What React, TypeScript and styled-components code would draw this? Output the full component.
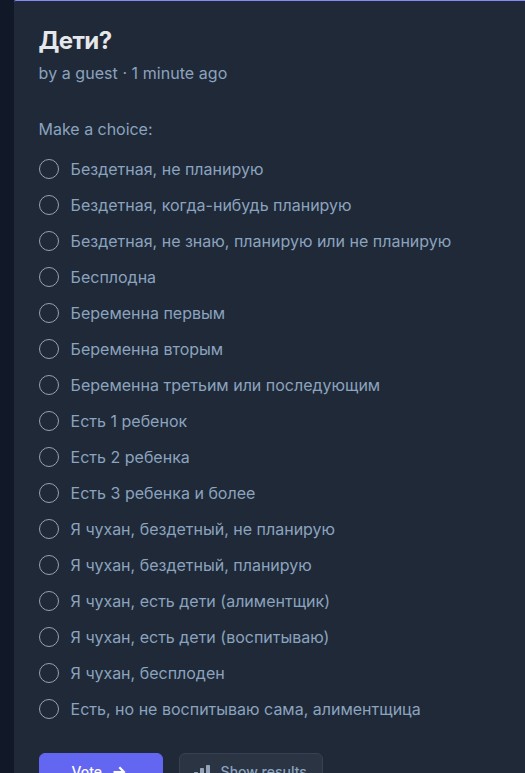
import React from "react";
import styled, { createGlobalStyle } from "styled-components";

const Global = createGlobalStyle`
  *, *::before, *::after { box-sizing: border-box; }
  body { margin: 0; background: #111827; font-family: Inter, "Liberation Sans", sans-serif; overflow: hidden; }
`;
const Page = styled.main`
  height: 773px;
  padding-left: 14px;
  overflow: hidden;
`;
const Card = styled.section`
  height: 820px;
  padding: 24px 24px 0 24.6px;
  background: #1f2937;
  border-top: 1px solid #818cf8;
  border-top-left-radius: 2px;
`;
const Title = styled.h1`
  margin: 0;
  font-size: 24px;
  line-height: 32px;
  font-weight: 700;
  letter-spacing: -0.6px;
  color: #e5e7eb;
`;
const Meta = styled.p`
  margin: 4px 0 32px;
  font-size: 16px;
  line-height: 24px;
  letter-spacing: 0.05px;
  color: #8ba3bf;
`;
const Prompt = styled.p`
  margin: 0 0 16px;
  font-size: 16px;
  line-height: 24px;
  letter-spacing: -0.03px;
  color: #8ba3bf;
`;
const Options = styled.div`
  display: flex;
  flex-direction: column;
  gap: 12px;
`;
const Option = styled.label`
  display: flex;
  align-items: center;
  gap: 12px;
  height: 24px;
  font-size: 16px;
  line-height: 24px;
  color: #8ba3bf;
  white-space: nowrap;
`;
const Radio = styled.input.attrs({ type: "radio", name: "choice" })`
  appearance: none;
  width: 20px;
  height: 20px;
  margin: 0;
  border: 1px solid #94a3b8;
  border-radius: 50%;
`;
const Actions = styled.div`
  display: flex;
  gap: 16px;
  margin-top: 32px;
`;
const Button = styled.button<{ $primary?: boolean }>`
  display: flex;
  align-items: center;
  gap: ${(p) => (p.$primary ? 10 : 9)}px;
  width: ${(p) => (p.$primary ? 124 : 144)}px;
  height: 38px;
  padding: 0 0 0 ${(p) => (p.$primary ? 32 : 12)}px;
  border: 1px solid ${(p) => (p.$primary ? "#6366f1" : "#374151")};
  border-radius: 6px;
  background: ${(p) => (p.$primary ? "#6366f1" : "#2a3443")};
  color: ${(p) => (p.$primary ? "#fff" : "#8ba3bf")};
  font: 500 14px/20px Inter, sans-serif;
`;

const choices = [
  "Бездетная, не планирую",
  "Бездетная, когда-нибудь планирую",
  "Бездетная, не знаю, планирую или не планирую",
  "Бесплодна",
  "Беременна первым",
  "Беременна вторым",
  "Беременна третьим или последующим",
  "Есть 1 ребенок",
  "Есть 2 ребенка",
  "Есть 3 ребенка и более",
  "Я чухан, бездетный, не планирую",
  "Я чухан, бездетный, планирую",
  "Я чухан, есть дети (алиментщик)",
  "Я чухан, есть дети (воспитываю)",
  "Я чухан, бесплоден",
  "Есть, но не воспитываю сама, алиментщица",
];

export default function App() {
  return (
    <Page>
      <Global />
      <Card>
        <Title>Дети?</Title>
        <Meta>by a guest · 1 minute ago</Meta>
        <Prompt>Make a choice:</Prompt>
        <Options>
          {choices.map((c) => (
            <Option key={c}><Radio />{c}</Option>
          ))}
        </Options>
        <Actions>
          <Button $primary>
            Vote
            <svg width="16" height="16" viewBox="0 0 16 16" fill="none" stroke="currentColor" strokeWidth="2.2"><path d="M1.5 8h10.5M7.3 3.3L12 8l-4.7 4.7" /></svg>
          </Button>
          <Button>
            <svg width="20" height="20" viewBox="0 0 20 20" fill="#94a3b8"><rect x="2" y="10" width="4" height="6" rx="0.8" /><rect x="8" y="6" width="4" height="10" rx="0.8" /><rect x="14" y="3" width="4" height="13" rx="0.8" /></svg>
            Show results
          </Button>
        </Actions>
      </Card>
    </Page>
  );
}
